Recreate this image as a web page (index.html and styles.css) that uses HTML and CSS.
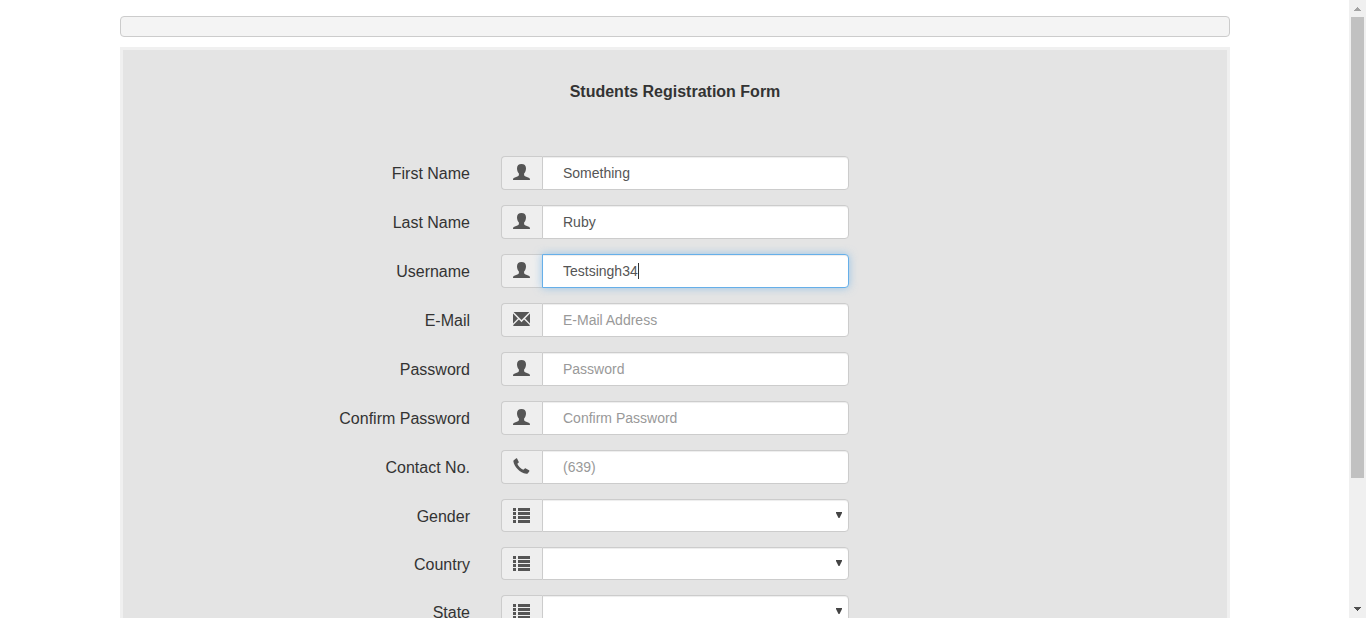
FILE: index.html
```html
<!DOCTYPE html>
<html lang="en">
<head>
<meta charset="utf-8">
<title>Students Registration Form</title>
<link rel="stylesheet" href="styles.css">
</head>
<body>
<svg class="sprite" aria-hidden="true">
  <symbol id="user" viewBox="0 0 17 16"><path d="M8.500 0C5.700 0 4 1.500 4 4.200c0 2.300.7 4 1.900 5.300v1.500c0 .7-.6 1.100-1.600 1.500L1.300 13.700C.4 14.100 0 14.800 0 16h17c0-1.200-.4-1.900-1.300-2.300l-3-1.200c-1-.4-1.600-.8-1.600-1.500V9.500C12.300 8.200 13 6.500 13 4.200 13 1.500 11.300 0 8.500 0z"/></symbol>
  <symbol id="mail" viewBox="0 0 17 16"><path d="M.6 1h15.800L8.500 9zM0 2.600l4.900 5L0 12.400zM17 2.600v9.800l-4.900-4.800zM.3 15v-1.100l5.600-5.300 2.600 2.700 2.600-2.700 5.600 5.300V15z"/></symbol>
  <symbol id="phone" viewBox="0 0 17 16"><path d="M.8 2.200 3 .5c.5-.3.900-.2 1.200.2l1.500 3c.2.500.1.800-.2 1.100l-1.200 1c.8 2.400 3.500 5.100 6 6l1.500-1.200c.3-.3.700-.3 1-.1l3.200 1.800c.5.300.5.800.2 1.200l-1.300 1.700c-.4.500-1 .7-1.700.6C7 15 1.200 8.800.4 3.500.3 3 .4 2.500.8 2.200z"/></symbol>
  <symbol id="list" viewBox="0 0 17 16"><path d="M0 1h3v3H0zM5 1h12v3H5zM0 5h3v3H0zM5 5h12v3H5zM0 9h3v3H0zM5 9h12v3H5zM0 13h3v3H0zM5 13h12v3H5z"/></symbol>
  <symbol id="down" viewBox="0 0 6 6"><path d="M0 0h6v1L3.500 6h-1L0 1z"/></symbol>
</svg>
<main class="page">
  <div class="container">
    <div class="well"></div>
    <form class="panel">
      <h1 class="title">Students Registration Form</h1>
      <div class="row"><label class="label" for="first">First Name</label><div class="group"><span class="addon"><svg class="icon"><use href="#user"/></svg></span><input class="control" id="first" type="text" value="Something"></div></div>
      <div class="row"><label class="label" for="last">Last Name</label><div class="group"><span class="addon"><svg class="icon"><use href="#user"/></svg></span><input class="control" id="last" type="text" value="Ruby"></div></div>
      <div class="row"><label class="label" for="username">Username</label><div class="group"><span class="addon"><svg class="icon"><use href="#user"/></svg></span><div class="field"><input class="control active" id="username" type="text" value="Testsingh34"><span class="caret"></span></div></div></div>
      <div class="row"><label class="label" for="email">E-Mail</label><div class="group"><span class="addon"><svg class="icon"><use href="#mail"/></svg></span><input class="control" id="email" type="email" placeholder="E-Mail Address"></div></div>
      <div class="row"><label class="label" for="password">Password</label><div class="group"><span class="addon"><svg class="icon"><use href="#user"/></svg></span><input class="control" id="password" type="password" placeholder="Password"></div></div>
      <div class="row"><label class="label" for="confirm">Confirm Password</label><div class="group"><span class="addon"><svg class="icon"><use href="#user"/></svg></span><input class="control" id="confirm" type="password" placeholder="Confirm Password"></div></div>
      <div class="row"><label class="label" for="contact">Contact No.</label><div class="group"><span class="addon"><svg class="icon"><use href="#phone"/></svg></span><input class="control" id="contact" type="tel" placeholder="(639)"></div></div>
      <div class="row"><label class="label" for="gender">Gender</label><div class="group choice"><span class="addon"><svg class="icon"><use href="#list"/></svg></span><div class="field"><select class="control" id="gender"><option></option></select><svg class="arrow"><use href="#down"/></svg></div></div></div>
      <div class="row"><label class="label" for="country">Country</label><div class="group choice"><span class="addon"><svg class="icon"><use href="#list"/></svg></span><div class="field"><select class="control" id="country"><option></option></select><svg class="arrow"><use href="#down"/></svg></div></div></div>
      <div class="row"><label class="label" for="state">State</label><div class="group choice"><span class="addon"><svg class="icon"><use href="#list"/></svg></span><div class="field"><select class="control" id="state"><option></option></select><svg class="arrow"><use href="#down"/></svg></div></div></div>
    </form>
  </div>
</main>
<div class="scrollbar" aria-hidden="true">
  <svg class="scroll-button up" viewBox="0 0 17 17"><path d="M5 11v-1h1V9h1V8h1V7h1v1h1v1h1v1h1v1z"/></svg>
  <div class="track"><div class="thumb"></div></div>
  <svg class="scroll-button" viewBox="0 0 17 17"><path d="M5 6h7v1h-1v1h-1v1H9v1H8V9H7V8H6V7H5z"/></svg>
</div>
</body>
</html>
```
FILE: styles.css
```css
* { box-sizing: border-box; }
body {
  margin: 0;
  display: flex;
  height: 100vh;
  overflow: hidden;
  background: #fff;
  color: #333;
  font: 16px/24px "Liberation Sans", Arial, sans-serif;
}
.sprite { position: absolute; width: 0; height: 0; }
.page { flex: 1; min-width: 0; padding: 16px 0 0 1px; overflow: hidden; }
.container { max-width: 1110px; margin: 0 auto; }
.well {
  height: 21px;
  margin-bottom: 10px;
  border: 1px solid #ccc;
  border-radius: 4px;
  background: #f4f4f4;
}
.panel {
  padding: 30px 0 15px;
  border: 3px solid #f0f0f0;
  background: #e4e4e4;
}
.title {
  margin: 0 0 52px;
  font-size: 16px;
  line-height: 24px;
  text-align: center;
}
.row {
  display: grid;
  grid-template-columns: repeat(3, 1fr);
  margin: 0 -15px 15px;
}
.label { padding: 0 16px; text-align: right; line-height: 36px; }
.row { height: 34px; }
.group { display: flex; height: 34px; margin: 0 15px; }
.row:has(.choice) { height: 33px; }
.choice { height: 33px; }
.addon {
  flex: none;
  width: 41px;
  padding: 7px 0 0 11px;
  border: 1px solid #ccc;
  border-right: 0;
  border-radius: 4px 0 0 4px;
  background: #eee;
}
.icon { display: block; width: 17px; height: 16px; fill: #555; }
.field { position: relative; display: flex; flex: 1; min-width: 0; }
.control {
  flex: 1;
  min-width: 0;
  margin: 0;
  padding: 0 20px;
  border: 1px solid #ccc;
  border-radius: 0 4px 4px 0;
  background: #fff;
  box-shadow: inset 0 1px 1px rgba(0, 0, 0, .075);
  color: #555;
  font: 14px/20px "Liberation Sans", Arial, sans-serif;
  appearance: none;
}
.control::placeholder { color: #999; opacity: 1; }
.control.active, .control:focus {
  outline: 0;
  border-color: #66afe9;
  box-shadow: inset 0 1px 1px rgba(0, 0, 0, .075), 0 0 8px rgba(102, 175, 233, .6);
}
.caret { position: absolute; left: 96px; top: 9px; width: 1px; height: 16px; background: #333; }
.field:focus-within .caret { display: none; }
.arrow { position: absolute; right: 7px; top: 13px; width: 6px; height: 6px; fill: #444; pointer-events: none; }
.scrollbar { flex: none; display: flex; flex-direction: column; width: 17px; background: #f0f0f0; }
.scroll-button { flex: none; width: 17px; height: 17px; fill: #505050; }
.up { fill: #a3a3a3; }
.track { flex: 1; padding: 0 2px; }
.thumb { height: 79%; background: #c1c1c1; }
```
